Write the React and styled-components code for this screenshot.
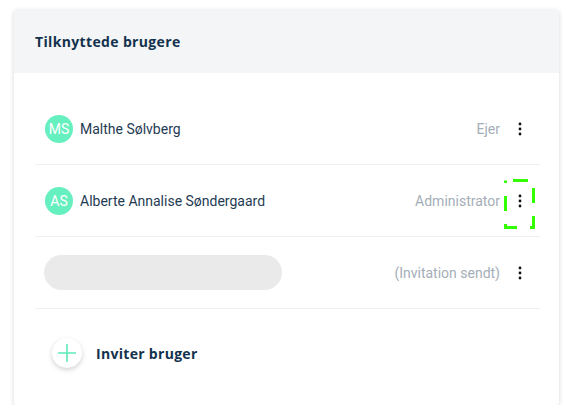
import React from "react";
import styled, { createGlobalStyle } from "styled-components";

const GlobalStyle = createGlobalStyle`
  body {
    margin: 0;
    background: #fff;
    font-family: Roboto, "Liberation Sans", sans-serif;
  }
`;

const Page = styled.div`
  padding: 10px 10px 0 14px;
`;

const Card = styled.section`
  width: 545px;
  background: #fff;
  border-radius: 3px;
  box-shadow: 0 1px 5px rgba(0, 0, 0, 0.16);
  overflow: hidden;
`;

const Header = styled.header`
  height: 63px;
  display: flex;
  align-items: center;
  padding: 0 21px;
  background: #f4f5f7;
`;

const Title = styled.h2`
  margin: 0;
  font-family: "Open Sans", "Liberation Sans", sans-serif;
  font-weight: 700;
  font-size: 14px;
  color: #12324d;
  letter-spacing: 0.35px;
`;

const Body = styled.div`
  padding: 20px 19px 8px 21px;
`;

const Row = styled.div`
  display: flex;
  align-items: center;
  gap: 9px;
  height: 72px;
  padding-right: 10px;
  border-bottom: 1px solid #eeeff1;
  box-sizing: border-box;
`;

const Person = styled.div`
  flex: 1;
  display: flex;
  align-items: center;
  gap: 7px;
  padding-left: 10px;
`;

const Avatar = styled.div`
  width: 28px;
  height: 28px;
  border-radius: 50%;
  background: #66efbf;
  color: #fff;
  font-size: 14px;
  display: flex;
  align-items: center;
  justify-content: center;
`;

const Name = styled.span`
  font-size: 14px;
  color: #1f3b53;
`;

const Skeleton = styled.div`
  width: 238px;
  height: 35px;
  border-radius: 18px;
  background: #eaeaea;
  margin-left: -1px;
`;

const Role = styled.span`
  font-size: 14px;
  color: #a4aeb7;
`;

const MenuButton = styled.button`
  position: relative;
  width: 21px;
  height: 40px;
  border: none;
  background: none;
  padding: 0;
  display: flex;
  align-items: center;
  justify-content: center;
  outline: none;
  cursor: pointer;
`;

const FocusRing = styled.svg`
  position: absolute;
  left: -5px;
  top: -2px;
  width: 31px;
  height: 50px;
  pointer-events: none;
`;

const InviteRow = styled.div`
  display: flex;
  align-items: center;
  gap: 14px;
  height: 88px;
  padding-left: 17px;
`;

const PlusButton = styled.button`
  width: 30px;
  height: 30px;
  border-radius: 50%;
  border: none;
  background: #fff;
  box-shadow: 0 2px 5px rgba(0, 0, 0, 0.18);
  display: flex;
  align-items: center;
  justify-content: center;
  padding: 0;
`;

const InviteText = styled.span`
  font-family: "Open Sans", "Liberation Sans", sans-serif;
  font-weight: 700;
  font-size: 14px;
  color: #12324d;
  letter-spacing: 0.3px;
`;

const Dots = () => (
  <svg width="4" height="14" viewBox="0 0 4 14">
    <circle cx="2" cy="2" r="1.4" fill="#111" />
    <circle cx="2" cy="7" r="1.4" fill="#111" />
    <circle cx="2" cy="12" r="1.4" fill="#111" />
  </svg>
);

const users = [
  { initials: "MS", name: "Malthe Sølvberg", role: "Ejer" },
  { initials: "AS", name: "Alberte Annalise Søndergaard", role: "Administrator", focused: true },
  { pending: true, role: "(Invitation sendt)" },
];

export default function App() {
  return (
    <>
      <GlobalStyle />
      <Page>
        <Card>
          <Header>
            <Title>Tilknyttede brugere</Title>
          </Header>
          <Body>
            {users.map((u, i) => (
              <Row key={i}>
                <Person>
                  {u.pending ? (
                    <Skeleton />
                  ) : (
                    <>
                      <Avatar>{u.initials}</Avatar>
                      <Name>{u.name}</Name>
                    </>
                  )}
                </Person>
                <Role>{u.role}</Role>
                <MenuButton>
                  <Dots />
                  {u.focused && (
                    <FocusRing viewBox="0 0 31 50">
                      <rect
                        x="1.5"
                        y="1.5"
                        width="28"
                        height="47"
                        fill="none"
                        stroke="#33ff00"
                        strokeWidth="3"
                        strokeDasharray="15 13"
                        strokeDashoffset="-7.5"
                      />
                    </FocusRing>
                  )}
                </MenuButton>
              </Row>
            ))}
            <InviteRow>
              <PlusButton>
                <svg width="18" height="18" viewBox="0 0 18 18">
                  <path d="M9 0v18M0 9h18" stroke="#5eeab8" strokeWidth="1.6" />
                </svg>
              </PlusButton>
              <InviteText>Inviter bruger</InviteText>
            </InviteRow>
          </Body>
        </Card>
      </Page>
    </>
  );
}
